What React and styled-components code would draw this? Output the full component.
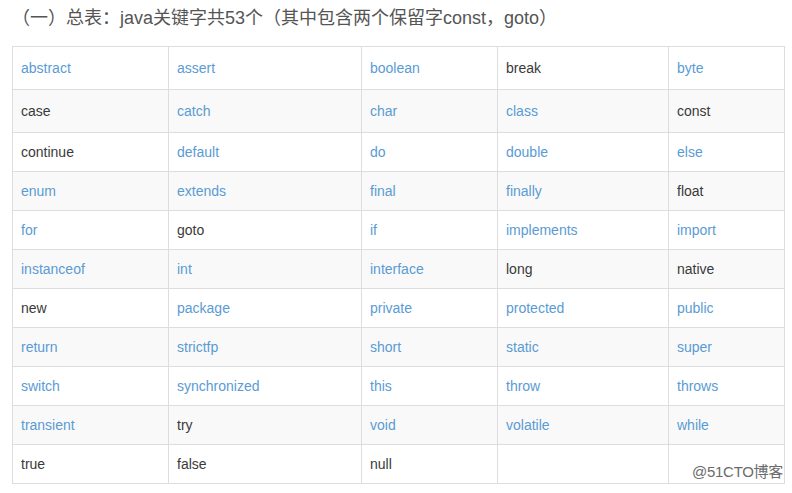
import React from 'react';
import styled, { createGlobalStyle } from 'styled-components';

const GlobalStyle = createGlobalStyle`
    body {
        margin: 0;
        background: #ffffff;
        font-family: "Liberation Sans", Arial, "Noto Sans CJK SC", sans-serif;
    }
`

const Page = styled.div`
    position: relative;
    width: 792px;
    height: 493px;
    padding: 0 9px 0 12px;
    box-sizing: border-box;
    overflow: hidden;
`

const Title = styled.h3`
    margin: 0;
    height: 46px;
    padding-top: 6px;
    box-sizing: border-box;
    font-size: 18px;
    font-weight: normal;
    line-height: 24px;
    color: #555;
    font-family: "Liberation Sans", Arial, "Noto Sans CJK SC", sans-serif;
`

const Table = styled.table`
    border-collapse: collapse;
    table-layout: fixed;
    width: 772px;
    font-size: 14px;
`

const Row = styled.tr`
    height: ${p => p.$h}px;
    background: ${p => (p.$odd ? '#f9f9f9' : '#ffffff')};
`

const Cell = styled.td`
    border: 1px solid #dddddd;
    padding: 0 8px;
    color: ${p => (p.$link ? '#5a9bd4' : '#3a3a3a')};
    vertical-align: middle;
    white-space: nowrap;
`

const Watermark = styled.div`
    position: absolute;
    right: 9px;
    bottom: 12px;
    font-size: 15px;
    color: #6b6b6b;
    font-family: "Liberation Sans", Arial, "Noto Sans CJK SC", sans-serif;
    text-shadow: 0 0 2px #fff, 0 0 2px #fff;
    letter-spacing: -0.3px;
`

// "!" marks a plain (unlinked) keyword
const rows = [
    ['abstract', 'assert', 'boolean', '!break', 'byte'],
    ['!case', 'catch', 'char', 'class', '!const'],
    ['!continue', 'default', 'do', 'double', 'else'],
    ['enum', 'extends', 'final', 'finally', '!float'],
    ['for', '!goto', 'if', 'implements', 'import'],
    ['instanceof', 'int', 'interface', '!long', '!native'],
    ['!new', 'package', 'private', 'protected', 'public'],
    ['return', 'strictfp', 'short', 'static', 'super'],
    ['switch', 'synchronized', 'this', 'throw', 'throws'],
    ['transient', '!try', 'void', 'volatile', 'while'],
    ['!true', '!false', '!null', '!', '!'],
]

const heights = [43, 43, 39, 39, 39, 39, 39, 39, 39, 39, 39]
const widths = [156, 193, 136, 171, 116]

const App = () => {
    return (
        <Page>
            <GlobalStyle />
            <Title>（一）总表：java关键字共53个（其中包含两个保留字const，goto）</Title>
            <Table>
                <colgroup>
                    {widths.map((w, i) => <col key={i} width={w} />)}
                </colgroup>
                <tbody>
                    {rows.map((row, r) => (
                        <Row key={r} $odd={r % 2 === 1} $h={heights[r]}>
                            {row.map((word, c) => {
                                const plain = word.startsWith('!');
                                return (
                                    <Cell key={c} $link={!plain}>
                                        {plain ? word.slice(1) : word}
                                    </Cell>
                                );
                            })}
                        </Row>
                    ))}
                </tbody>
            </Table>
            <Watermark>@51CTO博客</Watermark>
        </Page>
    )
};

export default App;
